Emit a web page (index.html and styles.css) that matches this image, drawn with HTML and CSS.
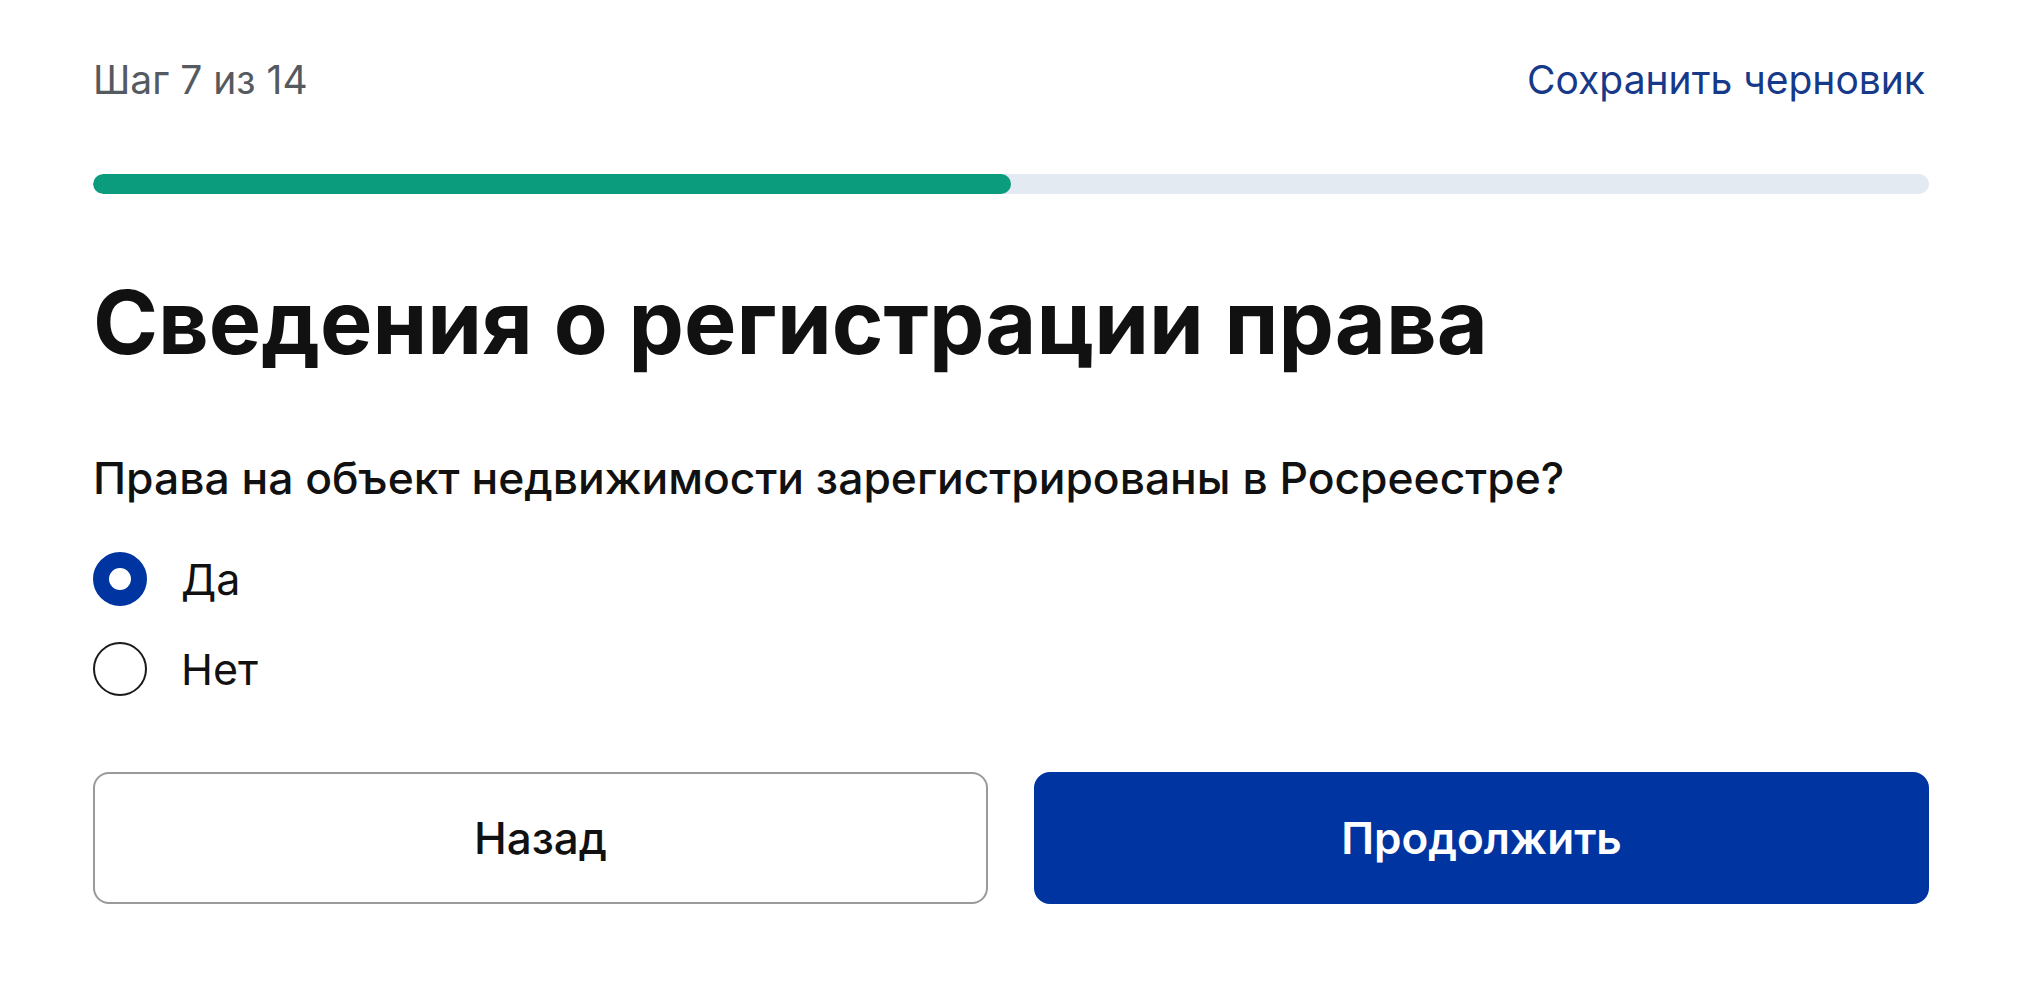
FILE: index.html
```html
<!DOCTYPE html>
<html lang="ru">
<head>
<meta charset="utf-8">
<title>Сведения о регистрации права</title>
<link rel="stylesheet" href="styles.css">
</head>
<body>
<main class="page">
  <div class="topbar">
    <span class="step">Шаг 7 из 14</span>
    <a class="draft" href="#">Сохранить черновик</a>
  </div>
  <div class="progress"><div class="progress-fill" style="width: 50%"></div></div>
  <h1 class="title">Сведения о регистрации права</h1>
  <p class="question">Права на объект недвижимости зарегистрированы в Росреестре?</p>
  <div class="options">
    <label class="option"><span class="radio radio-checked"></span><span class="option-label">Да</span></label>
    <label class="option"><span class="radio"></span><span class="option-label">Нет</span></label>
  </div>
  <div class="actions">
    <button class="btn btn-secondary" type="button">Назад</button>
    <button class="btn btn-primary" type="button">Продолжить</button>
  </div>
</main>
</body>
</html>
```
FILE: styles.css
```css
html, body {
  margin: 0;
  padding: 0;
  background: #ffffff;
}
body {
  font-family: Inter, "Noto Sans", sans-serif;
  color: #111111;
}
.page {
  width: 1836px;
  margin-left: 93px;
  padding-top: 56px;
}
.topbar {
  display: flex;
  justify-content: space-between;
  align-items: baseline;
  line-height: 48px;
  padding-right: 4px;
}
.step {
  font-size: 39px;
  color: #555a61;
}
.draft {
  font-size: 39px;
  color: #17398a;
  text-decoration: none;
}
.progress {
  margin-top: 70px;
  height: 20px;
  border-radius: 10px;
  background: #e4eaf2;
  overflow: hidden;
}
.progress-fill {
  height: 100%;
  background: #0a9c7c;
  border-radius: 10px;
}
.title {
  margin: 78px 0 0;
  font-size: 88px;
  line-height: 100px;
  font-weight: 700;
  color: #111111;
}
.question {
  margin: 80px 0 0;
  font-size: 44.4px;
  line-height: 52px;
  font-weight: 500;
}
.options {
  display: flex;
  flex-direction: column;
  gap: 36px;
  margin-top: 48px;
}
.option {
  display: flex;
  align-items: center;
  gap: 34px;
}
.radio {
  box-sizing: border-box;
  width: 54px;
  height: 54px;
  border-radius: 50%;
  border: 2px solid #1a1a1a;
  background: #fff;
}
.radio-checked {
  border: 16px solid #0034a0;
}
.option-label {
  font-size: 43px;
  line-height: 54px;
}
.actions {
  display: grid;
  grid-template-columns: 1fr 1fr;
  gap: 46px;
  margin-top: 76px;
}
.btn {
  height: 132px;
  border-radius: 16px;
  font-family: inherit;
  font-size: 44px;
  font-weight: 500;
  cursor: pointer;
}
.btn-secondary {
  background: #fff;
  border: 2px solid #9a9a9a;
  color: #111;
}
.btn-primary {
  background: #0034a0;
  border: 2px solid #0034a0;
  color: #fff;
  font-weight: 600;
}
```
